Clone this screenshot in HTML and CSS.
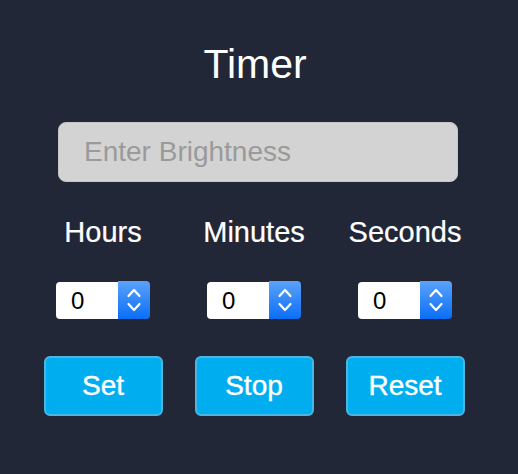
FILE: index.html
```
<!DOCTYPE html>
<html>
<head>
<meta charset="utf-8">
<link rel="stylesheet" href="styles.css">
</head>
<body>
<div class="app">
  <h1 class="title">Timer</h1>
  <div class="field"><span class="placeholder">Enter Brightness</span></div>
  <div class="row labels">
    <div class="label">Hours</div>
    <div class="label">Minutes</div>
    <div class="label">Seconds</div>
  </div>
  <div class="row spinners">
    <div class="num"><span class="val">0</span><span class="spin"><svg width="32" height="38" viewBox="0 0 32 38"><polyline points="10.5,15 16,9 21.5,15" fill="none" stroke="#fff" stroke-width="2.2" stroke-linecap="round" stroke-linejoin="round"/><polyline points="10.5,23 16,29 21.5,23" fill="none" stroke="#fff" stroke-width="2.2" stroke-linecap="round" stroke-linejoin="round"/></svg></span></div>
    <div class="num"><span class="val">0</span><span class="spin"><svg width="32" height="38" viewBox="0 0 32 38"><polyline points="10.5,15 16,9 21.5,15" fill="none" stroke="#fff" stroke-width="2.2" stroke-linecap="round" stroke-linejoin="round"/><polyline points="10.5,23 16,29 21.5,23" fill="none" stroke="#fff" stroke-width="2.2" stroke-linecap="round" stroke-linejoin="round"/></svg></span></div>
    <div class="num"><span class="val">0</span><span class="spin"><svg width="32" height="38" viewBox="0 0 32 38"><polyline points="10.5,15 16,9 21.5,15" fill="none" stroke="#fff" stroke-width="2.2" stroke-linecap="round" stroke-linejoin="round"/><polyline points="10.5,23 16,29 21.5,23" fill="none" stroke="#fff" stroke-width="2.2" stroke-linecap="round" stroke-linejoin="round"/></svg></span></div>
  </div>
  <div class="row buttons">
    <button class="btn">Set</button>
    <button class="btn">Stop</button>
    <button class="btn">Reset</button>
  </div>
</div>
</body>
</html>
```
FILE: styles.css
```
html, body {
  margin: 0;
  padding: 0;
  background: #212737;
  height: 100%;
}
body {
  font-family: "Liberation Sans", Arial, sans-serif;
  color: #fff;
}
.app {
  width: 510px;
  padding-top: 40px;
  display: flex;
  flex-direction: column;
}
.title {
  margin: 0;
  font-size: 41px;
  font-weight: normal;
  line-height: 48px;
  text-align: center;
}
.field {
  margin: 34px 0 0 58px;
  width: 400px;
  height: 60px;
  box-sizing: border-box;
  background: #d3d3d3;
  border: 1px solid #c6c6c6;
  border-radius: 8px;
  padding-left: 25px;
  display: flex;
  align-items: center;
}
.placeholder {
  font-size: 28px;
  color: #9a9a9a;
}
.row {
  display: grid;
  grid-template-columns: repeat(3, 151px);
  justify-content: center;
  justify-items: center;
  padding-right: 2px;
}
.labels {
  margin-top: 33px;
}
.label {
  font-size: 29px;
  line-height: 34px;
  -webkit-text-stroke: 0.2px #fff;
}
.spinners {
  margin-top: 32px;
}
.num {
  display: flex;
  align-items: stretch;
  height: 38px;
  width: 94px;
}
.val {
  flex: 1;
  background: #fff;
  color: #000;
  margin: 1px 0 0 0;
  border-radius: 4px 0 0 4px;
  font-size: 24px;
  line-height: 37px;
  padding-left: 15px;
}
.spin {
  width: 32px;
  height: 38px;
  border-radius: 0 4px 4px 0;
  background: linear-gradient(#5ba2fa, #0b6ef6);
  display: block;
}
.spin svg {
  display: block;
}
.buttons {
  margin-top: 37px;
}
.btn {
  width: 119px;
  height: 60px;
  box-sizing: border-box;
  background: #00aeef;
  border: 2px solid #4cb6e2;
  border-radius: 6px;
  color: #fff;
  font-family: "Liberation Sans", Arial, sans-serif;
  font-size: 28px;
  padding: 0;
  -webkit-text-stroke: 0.4px #fff;
}
```
